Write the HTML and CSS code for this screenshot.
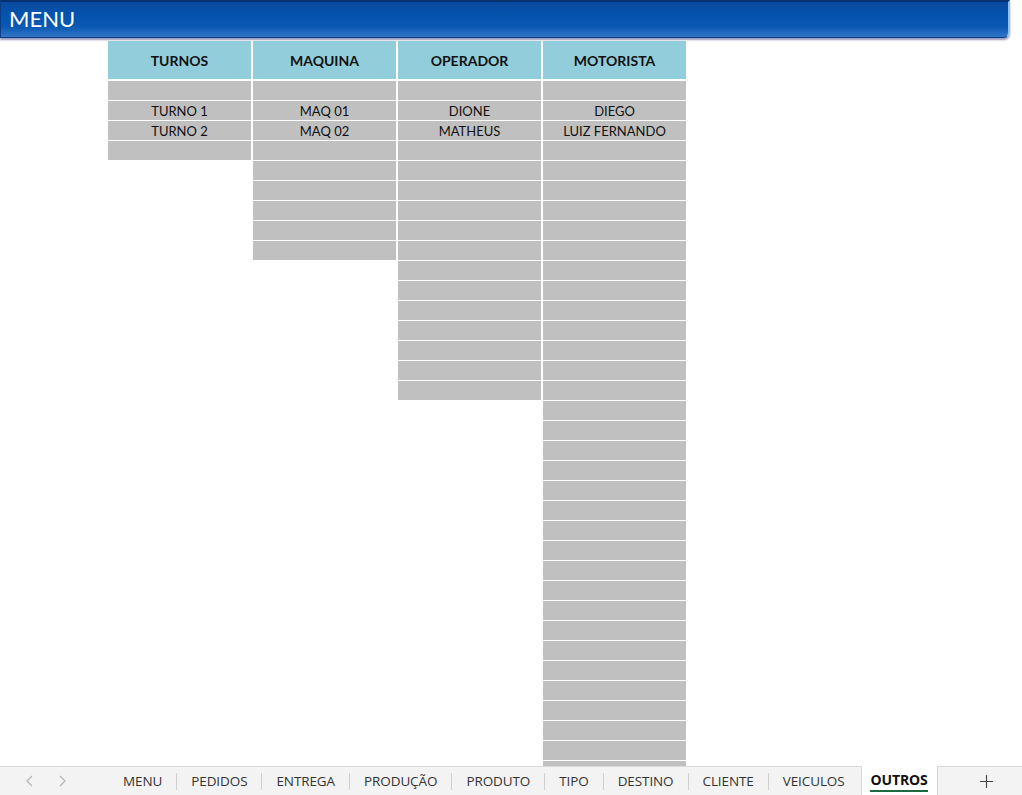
FILE: index.html
```html
<!DOCTYPE html>
<html lang="pt-BR">
<head>
    <meta charset="UTF-8">
    <meta name="viewport" content="width=device-width, initial-scale=1.0">
    <title>OUTROS</title>
    <link rel="stylesheet" href="styles.css">
</head>
<body>
    <div class="window">
        <div class="menu-bar">MENU</div>

        <div class="sheet">
            <div class="lists">
                <div class="col" id="turnos"><div class="head">TURNOS</div></div>
                <div class="col" id="maquina"><div class="head">MAQUINA</div></div>
                <div class="col" id="operador"><div class="head">OPERADOR</div></div>
                <div class="col" id="motorista"><div class="head">MOTORISTA</div></div>
            </div>
        </div>

        <div class="tab-bar">
            <div class="nav">
                <svg width="10" height="12" viewBox="0 0 10 12"><path d="M7 1 L2 6 L7 11" fill="none" stroke="#b5b5b5" stroke-width="1.2"/></svg>
                <svg width="10" height="12" viewBox="0 0 10 12"><path d="M3 1 L8 6 L3 11" fill="none" stroke="#b5b5b5" stroke-width="1.2"/></svg>
            </div>
            <div class="tabs">
                <span class="tab">MENU</span>
                <span class="tab">PEDIDOS</span>
                <span class="tab">ENTREGA</span>
                <span class="tab">PRODUÇÃO</span>
                <span class="tab">PRODUTO</span>
                <span class="tab">TIPO</span>
                <span class="tab">DESTINO</span>
                <span class="tab">CLIENTE</span>
                <span class="tab before-active">VEICULOS</span>
                <span class="tab active"><b>OUTROS</b></span>
                <span class="tab add">
                    <svg width="13" height="13" viewBox="0 0 13 13"><path d="M6.5 0 V13 M0 6.5 H13" stroke="#444" stroke-width="1.1"/></svg>
                </span>
            </div>
        </div>
    </div>

    <script>
        // lists on the OUTROS sheet, padded with empty cells like the spreadsheet
        const lists = {
            turnos: { rows: 4, items: ['', 'TURNO 1', 'TURNO 2'] },
            maquina: { rows: 9, items: ['', 'MAQ 01', 'MAQ 02'] },
            operador: { rows: 16, items: ['', 'DIONE', 'MATHEUS'] },
            motorista: { rows: 36, items: ['', 'DIEGO', 'LUIZ FERNANDO'] }
        };

        for (const id in lists) {
            const col = document.getElementById(id);
            for (let i = 0; i < lists[id].rows; i++) {
                const cell = document.createElement('div');
                cell.className = 'cell';
                cell.textContent = lists[id].items[i] || '';
                col.appendChild(cell);
            }
        }
    </script>
</body>
</html>
```

FILE: styles.css
```css
html, body {
    margin: 0;
    padding: 0;
    background-color: #fff;
}
.window {
    width: 1022px;
    height: 795px;
    display: flex;
    flex-direction: column;
    overflow: hidden;
}
.menu-bar {
    flex: 0 0 auto;
    width: 1010px;
    height: 38px;
    padding-left: 8px;
    box-sizing: border-box;
    border: 1px solid #0b3d86;
    border-top: 2px solid #06306e;
    border-right: 2px solid #8fc2ee;
    border-radius: 0 0 6px 0;
    background: linear-gradient(#0a4aa0 0%, #0553ab 35%, #0a58b2 70%, #2f76c8 100%);
    box-shadow: 0 2px 2px #9a98b8;
    color: #fff;
    font-family: Lato, "Liberation Sans", sans-serif;
    font-size: 22px;
    line-height: 34px;
}
.sheet {
    flex: 1;
    overflow: hidden;
    padding: 3px 0 0 108px;
}
.lists {
    display: flex;
    gap: 2px;
    align-items: flex-start;
}
.col {
    width: 143px;
    display: flex;
    flex-direction: column;
    gap: 1px;
}
.head {
    height: 38px;
    margin-bottom: 1px;
    background-color: #92cddc;
    font-family: Lato, "Liberation Sans", sans-serif;
    font-weight: bold;
    font-size: 14px;
    line-height: 40px;
    text-align: center;
    color: #111;
}
.cell {
    height: 19px;
    background-color: #c0c0c0;
    font-family: Lato, "Liberation Sans", sans-serif;
    font-size: 13px;
    line-height: 20px;
    text-align: center;
    color: #111;
}
.tab-bar {
    flex: 0 0 28px;
    display: flex;
    align-items: stretch;
    background-color: #f3f3f3;
    border-top: 1px solid #dadada;
    font-family: "Open Sans", "Liberation Sans", sans-serif;
    font-size: 13.5px;
    color: #333;
}
.nav {
    width: 109px;
    display: flex;
    align-items: center;
    gap: 22px;
    padding-left: 25px;
    box-sizing: border-box;
}
.tabs {
    display: flex;
    align-items: center;
}
.tab {
    padding: 0 14px;
    height: 17px;
    line-height: 17px;
    border-right: 1px solid #d0d0d0;
    letter-spacing: -0.1px;
}
.tab.before-active {
    border-right: none;
    padding-right: 16px;
}
.tab.active {
    align-self: stretch;
    height: auto;
    margin-top: -1px;
    width: 75px;
    padding: 0;
    background-color: #fff;
    border-left: 1px solid #d6d6d6;
    border-right: 1px solid #d6d6d6;
    display: flex;
    align-items: center;
    justify-content: center;
    color: #111;
}
.tab.active b {
    font-weight: bold;
    font-size: 14px;
    border-bottom: 2px solid #1e6b41;
    padding-bottom: 2px;
    margin-top: 2px;
    line-height: 17px;
}
.tab.add {
    border-right: none;
    padding: 0 0 0 42px;
    display: flex;
    align-items: center;
}
```
